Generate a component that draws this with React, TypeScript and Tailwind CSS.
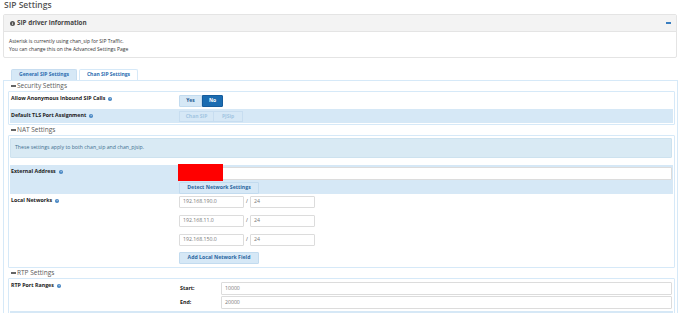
import React from 'react';

function Help() {
  return (
    <svg viewBox="0 0 10 10" className="ml-[3px] inline-block h-[4px] w-[4px] align-middle">
      <circle cx="5" cy="5" r="5" fill="#3b7fc0" />
      <path d="M3.6 3.8a1.5 1.5 0 1 1 1.9 1.4c-.4.2-.5.4-.5.8" stroke="#fff" strokeWidth="1.2" fill="none" />
      <circle cx="5" cy="7.6" r=".7" fill="#fff" />
    </svg>
  );
}

function Heading({ title }: { title: string }) {
  return (
    <div className="flex h-[10px] items-center pl-[3px] text-[6.5px] leading-[8px] text-[#5a5a5a]">
      <span className="mr-[1px] inline-block h-[1.5px] w-[5px] bg-[#666]" />
      {title}
    </div>
  );
}

function Row({ label, blue, className, children }: { label: string; blue?: boolean; className?: string; children: React.ReactNode }) {
  return (
    <div className={`flex ${blue ? 'bg-[#d6e8f6]' : ''} ${className ?? ''}`}>
      <div className="w-[169px] shrink-0 pl-[1px] pt-[2px] text-[5.3px] font-bold leading-[8px] text-[#222]">
        {label}
        <Help />
      </div>
      <div className="flex-1 pr-[1px]">{children}</div>
    </div>
  );
}

function Field({ value, className }: { value: string; className?: string }) {
  return (
    <div className={`flex items-center rounded-[1px] border border-[#dcdcdc] bg-white px-[3px] text-[5.2px] text-[#777] ${className ?? ''}`}>
      {value}
    </div>
  );
}

function BlueBtn({ children }: { children: React.ReactNode }) {
  return (
    <div className="flex h-[12px] w-[80px] items-center justify-center rounded-[1px] border border-[#c2dbef] bg-[#d6e8f6] text-[5.2px] font-bold text-[#2a66a0]">
      {children}
    </div>
  );
}

const networks = [
  ['192.168.190.0', '24'],
  ['192.168.11.0', '24'],
  ['192.168.150.0', '24'],
];

export default function App() {
  return (
    <div className="h-[313px] w-[690px] overflow-hidden bg-white font-['Open_Sans',sans-serif] text-[#333]">
      <h1 className="ml-[4px] h-[14px] text-[8.5px] font-semibold leading-[9px] text-[#555]">SIP Settings</h1>

      {/* driver info panel */}
      <div className="ml-[3px] w-[674px] rounded-[2px] border border-[#e4e4e4]">
        <div className="flex h-[17px] items-center justify-between border-b border-[#e4e4e4] bg-[#f3f3f3] pl-[6px] pr-[5px]">
          <div className="flex items-center text-[6.3px] font-bold text-[#444]">
            <svg viewBox="0 0 10 10" className="mr-[2px] h-[5px] w-[5px]">
              <circle cx="5" cy="5" r="5" fill="#555" />
              <rect x="4.3" y="4.2" width="1.4" height="3.6" fill="#fff" />
              <circle cx="5" cy="2.8" r=".8" fill="#fff" />
            </svg>
            SIP driver information
          </div>
          <span className="h-[2px] w-[5px] bg-[#3a7ec0]" />
        </div>
        <div className="px-[5px] pb-[4px] pt-[5px] text-[5px] leading-[8px] text-[#333]">
          <p>Asterisk is currently using chan_sip for SIP Traffic.</p>
          <p>You can change this on the Advanced Settings Page</p>
        </div>
      </div>

      {/* tabs */}
      <div className="ml-[11px] mt-[11px] flex h-[11px] gap-[2px] text-[5px] font-bold text-[#2b6cb0]">
        <div className="flex w-[66px] items-center justify-center rounded-t-[2px] border border-b-0 border-[#c7ddf0] bg-[#d6e8f6]">General SIP Settings</div>
        <div className="flex w-[59px] items-center justify-center rounded-t-[2px] border border-b-0 border-[#d6e9f8] bg-white">Chan SIP Settings</div>
      </div>

      <div className="ml-[3px] w-[675px] border-x border-t border-[#d6e9f8] pl-[4px] pr-[2px]">
        <Heading title="Security Settings" />
        <div className="rounded-[1px] border border-[#d6e9f8] px-[1px] pb-[1px]">
          <Row label="Allow Anonymous Inbound SIP Calls" className="h-[17px]">
            <div className="mt-[3px] flex h-[12px] w-[44px] text-[5px] font-bold">
              <div className="flex w-[23px] items-center justify-center rounded-l-[1px] border border-[#c2dbef] bg-[#d6e8f6] text-[#1d5a91]">Yes</div>
              <div className="flex w-[21px] items-center justify-center rounded-r-[1px] border border-[#165c9c] bg-[#1b6cb1] text-white">No</div>
            </div>
          </Row>
          <Row label="Default TLS Port Assignment" blue className="h-[14px]">
            <div className="mt-[2px] flex h-[11px] text-[5px] font-bold text-[#a3c6e2]">
              <div className="flex w-[35px] items-center justify-center border border-[#c7ddf0]">Chan SIP</div>
              <div className="flex w-[29px] items-center justify-center border border-l-0 border-[#c7ddf0]">PJSip</div>
            </div>
          </Row>
        </div>

        <Heading title="NAT Settings" />
        <div className="rounded-[1px] border border-[#d6e9f8] px-[1px] pb-[1px]">
          <div className="mr-[1px] mt-[2px] flex h-[20px] items-center rounded-[1px] border border-[#cde2ef] bg-[#d9eaf4] px-[4px] text-[5.2px] text-[#3d6e8f]">
            These settings apply to both chan_sip and chan_pjsip.
          </div>
          <Row label="External Address" blue className="mt-[7px] h-[29px]">
            <div className="relative mt-[2px]">
              <Field value="" className="h-[13px]" />
              <div className="absolute left-[-1px] top-[-3px] h-[17px] w-[45px] bg-[#ff0000]" />
            </div>
            <div className="mt-[2px]">
              <BlueBtn>Detect Network Settings</BlueBtn>
            </div>
          </Row>
          <Row label="Local Networks" className="h-[72px]">
            <div className="flex flex-col gap-[7px] pt-[2px]">
              {networks.map(([ip, mask]) => (
                <div key={ip} className="flex items-center">
                  <Field value={ip} className="h-[12px] w-[65px]" />
                  <span className="w-[6px] text-center text-[5px] text-[#555]">/</span>
                  <Field value={mask} className="h-[12px] w-[65px]" />
                </div>
              ))}
              <div className="-mt-[1px]">
                <BlueBtn>Add Local Network Field</BlueBtn>
              </div>
            </div>
          </Row>
        </div>

        <Heading title="RTP Settings" />
        <div className="rounded-[1px] border border-[#d6e9f8] px-[1px]">
          <Row label="RTP Port Ranges" className="h-[32px]">
            <div className="flex flex-col gap-[1px] pt-[3px]">
              {[
                ['Start:', '10000'],
                ['End:', '20000'],
              ].map(([l, v]) => (
                <div key={l} className="flex items-center">
                  <span className="w-[42px] pl-[1px] text-[5.3px] font-bold text-[#222]">{l}</span>
                  <Field value={v} className="h-[13px] flex-1" />
                </div>
              ))}
            </div>
          </Row>
          <div className="h-[10px] bg-[#d6e8f6]" />
        </div>
      </div>
    </div>
  );
}
